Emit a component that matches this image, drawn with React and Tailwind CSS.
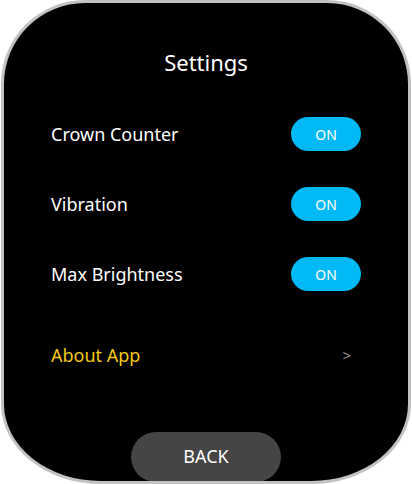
const SETTINGS = [
  { label: "Crown Counter", on: true },
  { label: "Vibration", on: true },
  { label: "Max Brightness", on: true },
];

function Toggle({ on }) {
  return (
    <button
      type="button"
      className="w-[70px] h-[34px] rounded-full bg-[#00b9f5] text-white text-[14px] flex items-center justify-center"
    >
      {on ? "ON" : "OFF"}
    </button>
  );
}

export default function App() {
  return (
    <div className="w-[412px] h-[484px] bg-white font-['Noto_Sans',sans-serif]">
      <div className="relative ml-[1px] w-[410px] h-[484px] border-[3px] border-[#c2c2c2] bg-black rounded-t-[84px] rounded-bl-[100px_80px] rounded-br-[100px_80px] overflow-hidden flex flex-col">
        <h1 className="pt-[43px] h-[75px] leading-[32px] text-center text-white text-[22px]">
          Settings
        </h1>

        <div className="mt-[21px] px-[47px] flex flex-col">
          {SETTINGS.map((s) => (
            <div key={s.label} className="h-[70px] flex items-center justify-between">
              <span className="text-white text-[18px]">{s.label}</span>
              <Toggle on={s.on} />
            </div>
          ))}
          <div className="mt-[11px] h-[70px] flex items-center justify-between">
            <span className="text-[#f2c811] text-[18px]">About App</span>
            <span className="mr-[10px] text-[#9a9a9a] text-[15px]">&gt;</span>
          </div>
        </div>

        <button
          type="button"
          className="mt-auto -mb-[1px] self-center w-[150px] h-[50px] shrink-0 rounded-full bg-[#454545] text-white text-[18px] flex items-center justify-center pb-[1px]"
        >
          BACK
        </button>
      </div>
    </div>
  );
}
